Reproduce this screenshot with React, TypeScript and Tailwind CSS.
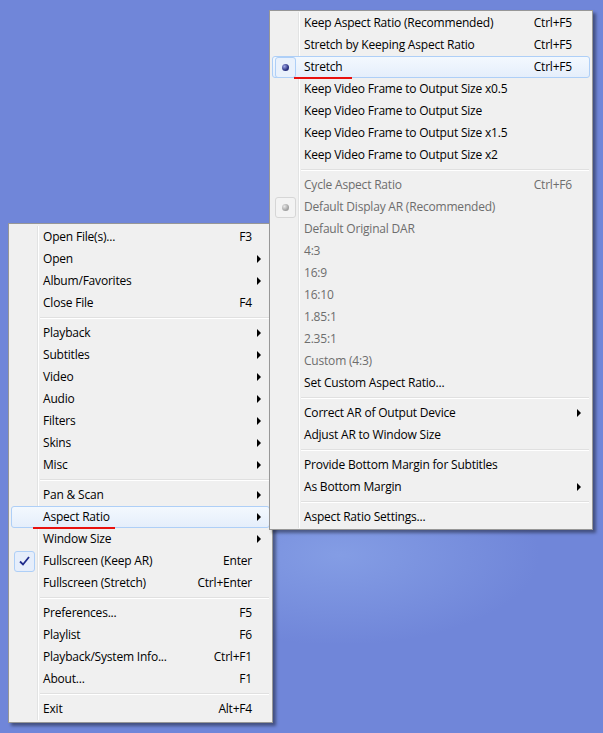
import React from "react";

type Item =
  | { sep: true }
  | {
      sep?: false;
      label: string;
      shortcut?: string;
      sub?: boolean;
      disabled?: boolean;
      check?: boolean;
      radio?: "on" | "off";
      hover?: boolean;
      mark?: number;
    };

const mainMenu: Item[] = [
  { label: "Open File(s)...", shortcut: "F3" },
  { label: "Open", sub: true },
  { label: "Album/Favorites", sub: true },
  { label: "Close File", shortcut: "F4" },
  { sep: true },
  { label: "Playback", sub: true },
  { label: "Subtitles", sub: true },
  { label: "Video", sub: true },
  { label: "Audio", sub: true },
  { label: "Filters", sub: true },
  { label: "Skins", sub: true },
  { label: "Misc", sub: true },
  { sep: true },
  { label: "Pan & Scan", sub: true },
  { label: "Aspect Ratio", sub: true, hover: true, mark: 82 },
  { label: "Window Size", sub: true },
  { label: "Fullscreen (Keep AR)", shortcut: "Enter", check: true },
  { label: "Fullscreen (Stretch)", shortcut: "Ctrl+Enter" },
  { sep: true },
  { label: "Preferences...", shortcut: "F5" },
  { label: "Playlist", shortcut: "F6" },
  { label: "Playback/System Info...", shortcut: "Ctrl+F1" },
  { label: "About...", shortcut: "F1" },
  { sep: true },
  { label: "Exit", shortcut: "Alt+F4" },
];

const ratioMenu: Item[] = [
  { label: "Keep Aspect Ratio (Recommended)", shortcut: "Ctrl+F5" },
  { label: "Stretch by Keeping Aspect Ratio", shortcut: "Ctrl+F5" },
  { label: "Stretch", shortcut: "Ctrl+F5", radio: "on", hover: true, mark: 58 },
  { label: "Keep Video Frame to Output Size x0.5" },
  { label: "Keep Video Frame to Output Size" },
  { label: "Keep Video Frame to Output Size x1.5" },
  { label: "Keep Video Frame to Output Size x2" },
  { sep: true },
  { label: "Cycle Aspect Ratio", shortcut: "Ctrl+F6", disabled: true },
  { label: "Default Display AR (Recommended)", disabled: true, radio: "off" },
  { label: "Default Original DAR", disabled: true },
  { label: "4:3", disabled: true },
  { label: "16:9", disabled: true },
  { label: "16:10", disabled: true },
  { label: "1.85:1", disabled: true },
  { label: "2.35:1", disabled: true },
  { label: "Custom (4:3)", disabled: true },
  { label: "Set Custom Aspect Ratio..." },
  { sep: true },
  { label: "Correct AR of Output Device", sub: true },
  { label: "Adjust AR to Window Size" },
  { sep: true },
  { label: "Provide Bottom Margin for Subtitles" },
  { label: "As Bottom Margin", sub: true },
  { sep: true },
  { label: "Aspect Ratio Settings..." },
];

function CheckMark() {
  return (
    <svg width="11" height="10" viewBox="0 0 11 10">
      <path d="M1 5.5 L4 8.5 L10 1" fill="none" stroke="#1f2b8c" strokeWidth="1.8" />
    </svg>
  );
}

function MenuRow({ item }: { item: Extract<Item, { label: string }> }) {
  const color = item.disabled ? "text-[#6d6d6d]" : "text-black";
  return (
    <div
      className={`relative flex h-[22px] items-center rounded-[3px] ${
        item.hover
          ? "border border-[#aecff7] bg-[linear-gradient(#f3f8fe,#e5eefb)]"
          : "border border-transparent"
      }`}
    >
      <div className="flex h-full w-[25px] shrink-0 items-center justify-center">
        {item.check && (
          <div className="flex h-[21px] w-[21px] items-center justify-center rounded-[3px] border border-[#aecff7] bg-[#e6eefb]">
            <CheckMark />
          </div>
        )}
        {item.radio === "on" && (
          <div className="flex h-[21px] w-[21px] items-center justify-center rounded-[3px] border border-[#aecff7] bg-[#e9f1fc]">
            <div className="h-[7px] w-[7px] rounded-full bg-[radial-gradient(circle_at_35%_35%,#9da6e6,#2a3283_60%,#1b2063)]" />
          </div>
        )}
        {item.radio === "off" && (
          <div className="flex h-[21px] w-[21px] items-center justify-center rounded-[3px] border border-[#d6d6d6] bg-[#f3f3f3]">
            <div className="h-[7px] w-[7px] rounded-full bg-[radial-gradient(circle_at_35%_35%,#e8e8e8,#a5a5a5_60%,#8c8c8c)]" />
          </div>
        )}
      </div>
      <div className={`relative flex-1 pl-[6px] ${color}`}>
        {item.label}
        {item.mark && (
          <span
            className="absolute left-[-4px] top-[16px] h-[2px] bg-[#e8110f]"
            style={{ width: item.mark }}
          />
        )}
      </div>
      {item.shortcut && <div className={`${color}`}>{item.shortcut}</div>}
      <div className="flex w-[17px] shrink-0 justify-end pr-[8px]">
        {item.sub && (
          <span className="h-0 w-0 border-y-[4px] border-l-[4px] border-y-transparent border-l-black" />
        )}
      </div>
    </div>
  );
}

function Menu({ items, className }: { items: Item[]; className: string }) {
  return (
    <div
      className={`absolute border border-[#979797] bg-[#f0f0f0] px-[2px] shadow-[3px_3px_3px_rgba(0,0,0,0.4)] ${className}`}
    >
      <div className="bg-[linear-gradient(to_right,transparent_26px,#e2e3e3_26px,#e2e3e3_27px,#ffffff_27px,#ffffff_28px,transparent_28px)]">
        {items.map((item, i) =>
          item.sep ? (
            <div key={i} className="flex h-[8px] items-center pl-[29px] pr-[1px]">
              <div className="h-[2px] w-full border-t border-[#e0e0e0] border-b border-b-white" />
            </div>
          ) : (
            <MenuRow key={i} item={item} />
          )
        )}
      </div>
    </div>
  );
}

export default function App() {
  return (
    <div className="relative h-[733px] w-[603px] overflow-hidden bg-[#7086d9] font-['Open_Sans',sans-serif] text-[12px] leading-none tracking-[-0.2px]">
      <div className="absolute inset-0 bg-[radial-gradient(ellipse_200px_90px_at_340px_555px,rgba(145,172,236,0.6),transparent)]" />
      <Menu items={mainMenu} className="left-[8px] top-[223px] w-[265px] py-[2px]" />
      <Menu items={ratioMenu} className="left-[269px] top-[10px] w-[324px] py-[1px]" />
    </div>
  );
}
